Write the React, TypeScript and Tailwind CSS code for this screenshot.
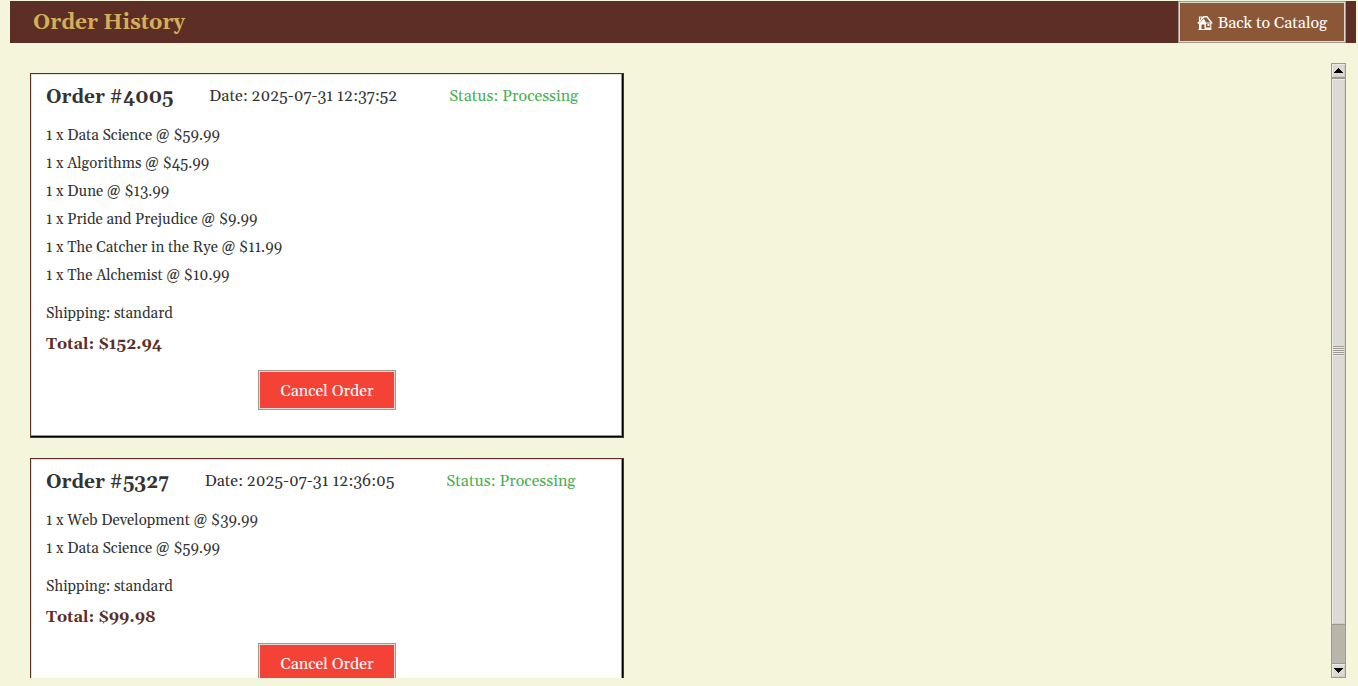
import { useRef } from "react";

type Item = { quantity: number; title: string; price: string };
type Order = {
  id: number;
  date: string;
  status: string;
  items: Item[];
  shipping: string;
  total: string;
};

const orders: Order[] = [
  {
    id: 4005,
    date: "2025-07-31 12:37:52",
    status: "Processing",
    items: [
      { quantity: 1, title: "Data Science", price: "$59.99" },
      { quantity: 1, title: "Algorithms", price: "$45.99" },
      { quantity: 1, title: "Dune", price: "$13.99" },
      { quantity: 1, title: "Pride and Prejudice", price: "$9.99" },
      { quantity: 1, title: "The Catcher in the Rye", price: "$11.99" },
      { quantity: 1, title: "The Alchemist", price: "$10.99" },
    ],
    shipping: "standard",
    total: "$152.94",
  },
  {
    id: 5327,
    date: "2025-07-31 12:36:05",
    status: "Processing",
    items: [
      { quantity: 1, title: "Web Development", price: "$39.99" },
      { quantity: 1, title: "Data Science", price: "$59.99" },
    ],
    shipping: "standard",
    total: "$99.98",
  },
];

function HouseIcon() {
  return (
    <svg width="16" height="16" viewBox="0 0 16 16" aria-hidden="true">
      <path d="M2.500 6V2H5v2" fill="none" stroke="currentColor" strokeWidth="1.2" />
      <path d="M0.800 8.500 7 1.800H10l5.200 6.700" fill="none" stroke="currentColor" strokeWidth="1.4" />
      <path
        fillRule="evenodd"
        d="M2 8.500 7 3.800 9 7.500H14.300V15H1.500V14H2ZM4.500 9.500V14H7.500V9.500ZM9 8.500V14h4.300V8.500Z"
        fill="currentColor"
      />
      <path d="M9 12.500h5V15H9ZM10.500 9h2v2h-2Z" fill="currentColor" />
    </svg>
  );
}

function OrderCard({ order }: { order: Order }) {
  return (
    <article className="w-full max-w-[594px] shrink-0 border border-[#5c2e25] bg-white px-[15px] pt-[9px] pb-[27px] text-[#333333] shadow-[inset_-1px_-1px_0_#000000,inset_-2px_-2px_0_#8f9a98,inset_1px_1px_0_#e4e0de]">
      <header className="flex h-7 items-start">
        <h2 className="mr-9 text-[19px] leading-7 font-bold">Order #{order.id}</h2>
        <p className="mr-[52px] text-[16px] leading-[26px]">Date: {order.date}</p>
        <p className="text-[16px] leading-[26px] text-[#4caf50]">Status: {order.status}</p>
      </header>
      <ul className="mt-[11px] text-[15px] leading-7">
        {order.items.map((item) => (
          <li key={item.title}>
            {item.quantity} x {item.title} @ {item.price}
          </li>
        ))}
      </ul>
      <p className="mt-2.5 text-[15px] leading-7">Shipping: {order.shipping}</p>
      <p className="text-[16px] leading-8 font-bold text-[#5c2e25]">Total: {order.total}</p>
      <button
        type="button"
        className="mx-auto mt-2.5 block h-10 w-[138px] border border-[#9e9a91] bg-[#f44336] pt-0.5 text-[16px] text-white shadow-[inset_0_0_0_1px_#dedbd4]"
      >
        Cancel Order
      </button>
    </article>
  );
}

function Arrow({ down = false }: { down?: boolean }) {
  return (
    <svg width="9" height="5" viewBox="0 0 9 5" shapeRendering="crispEdges" aria-hidden="true">
      <path d={down ? "M0 0h9v1H8v1H7v1H6v1H5v1H4V4H3V3H2V2H1V1H0Z" : "M4 0h1v1h1v1h1v1h1v1h1v1H0V4h1V3h1V2h1V1h1Z"} />
    </svg>
  );
}

function ScrollBar({ onStep }: { onStep: (amount: number) => void }) {
  const arrowButton =
    "flex h-[15px] w-full shrink-0 items-center justify-center border border-[#9e9a91] bg-[#dcdad5] shadow-[inset_1px_1px_0_#eeebe7,inset_-1px_-1px_0_#cfcdc8]";
  return (
    <div className="flex w-[15px] shrink-0 flex-col bg-[#bab5ab]">
      <button type="button" aria-label="Scroll up" className={arrowButton} onClick={() => onStep(-60)}>
        <Arrow />
      </button>
      <div className="flex min-h-0 flex-1 flex-col border-x border-[#9e9a91]">
        <div className="-mx-px flex h-[547px] max-h-[94%] shrink-0 items-center justify-center border border-[#9e9a91] bg-[#dcdad5] pb-0.5 shadow-[inset_1px_1px_0_#eeebe7,inset_-1px_-1px_0_#cfcdc8]">
          <svg width="11" height="10" viewBox="0 0 11 10" shapeRendering="crispEdges" aria-hidden="true">
            <path d="M0 0h11v1H0ZM0 2h11v1H0ZM0 4h11v1H0ZM0 6h11v1H0ZM0 8h11v1H0Z" fill="#9e9a91" />
            <path d="M0 1h11v1H0ZM0 3h11v1H0ZM0 5h11v1H0ZM0 7h11v1H0ZM0 9h11v1H0Z" fill="#eeebe7" />
          </svg>
        </div>
      </div>
      <button type="button" aria-label="Scroll down" className={arrowButton} onClick={() => onStep(60)}>
        <Arrow down />
      </button>
    </div>
  );
}

export default function App() {
  const list = useRef<HTMLDivElement>(null);
  return (
    <div className="flex h-screen flex-col bg-[#f5f5dc] pt-px pr-0.5 pb-2 pl-2.5 font-['Gelasio','Liberation_Serif',serif]">
      <header className="flex h-[42px] shrink-0 items-center justify-between bg-[#5c2e25] pr-2.5 pl-[23px]">
        <h1 className="pt-0.5 text-[21px] leading-7 font-bold text-[#d4af57]">Order History</h1>
        <a
          href="#catalog"
          className="flex h-full w-[168px] items-center justify-center gap-[5px] border border-[#9e9a91] bg-[#8b5737] pt-0.5 text-[16px] text-white shadow-[inset_0_0_0_1px_#dedbd4]"
        >
          <HouseIcon />
          Back to Catalog
        </a>
      </header>
      <main className="mt-5 flex min-h-0 flex-1 pr-2.5 pl-5">
        <div ref={list} className="flex min-w-0 flex-1 flex-col gap-5 overflow-hidden pt-2.5">
          {orders.map((order) => (
            <OrderCard key={order.id} order={order} />
          ))}
        </div>
        <ScrollBar onStep={(amount) => list.current?.scrollBy({ top: amount })} />
      </main>
    </div>
  );
}
